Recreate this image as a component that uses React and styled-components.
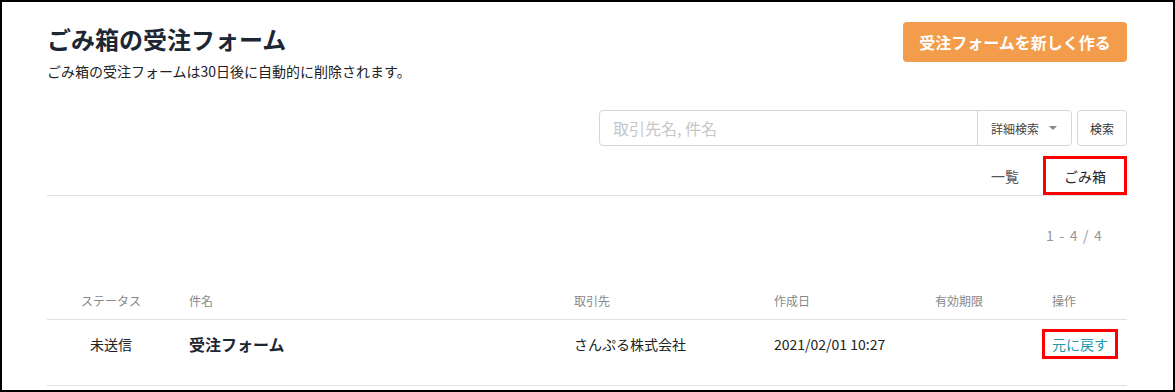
import React from 'react';
import styled, { createGlobalStyle } from 'styled-components';

const GlobalStyle = createGlobalStyle`
    * { box-sizing: border-box; }
    body {
        margin: 0;
        font-family: 'Noto Sans CJK JP', 'Noto Sans', sans-serif;
        color: #222;
        background: #fff;
    }
`;

const Page = styled.div`
    width: 1175px;
    height: 392px;
    border: 2px solid #000;
    padding: 18px 46px 0 45px;
    overflow: hidden;
`;

const Header = styled.div`
    display: flex;
    justify-content: space-between;
    align-items: flex-start;
`;

const TitleBlock = styled.div`
    padding-top: 2px;
`;

const Title = styled.h1`
    margin: 0;
    font-size: 24px;
    line-height: 34px;
    font-weight: 700;
    color: #1d2733;
`;

const Note = styled.p`
    margin: 6px 0 0;
    font-size: 14px;
    line-height: 18px;
    color: #222;
`;

const PrimaryButton = styled.button`
    width: 224px;
    height: 40px;
    margin-top: 2px;
    border: none;
    border-radius: 4px;
    background: #f39c4b;
    color: #fff;
    font-family: inherit;
    font-size: 16px;
    font-weight: 700;
`;

const SearchRow = styled.div`
    display: flex;
    justify-content: flex-end;
    gap: 5px;
    margin-top: 30px;
`;

const SearchGroup = styled.div`
    display: flex;
    width: 473px;
    height: 36px;
    border: 1px solid #d3d7dc;
    border-radius: 4px;
`;

const SearchInput = styled.input`
    flex: 1;
    min-width: 0;
    border: none;
    outline: none;
    padding: 0 13px;
    font-family: inherit;
    font-size: 16px;
    background: transparent;
    &::placeholder { color: #c4c8cc; }
`;

const DetailToggle = styled.div`
    display: flex;
    align-items: center;
    gap: 10px;
    width: 94px;
    padding-left: 13px;
    border-left: 1px solid #d3d7dc;
    font-size: 12px;
    color: #444;
`;

const Caret = styled.span`
    width: 0;
    height: 0;
    border-left: 4px solid transparent;
    border-right: 4px solid transparent;
    border-top: 4px solid #888;
`;

const SearchButton = styled.button`
    width: 50px;
    height: 36px;
    border: 1px solid #d3d7dc;
    border-radius: 4px;
    background: #fff;
    font-family: inherit;
    font-size: 12px;
    color: #333;
`;

const Tabs = styled.div`
    display: flex;
    justify-content: flex-end;
    margin-top: 10px;
    border-bottom: 1px solid #dde1e6;
`;

const Tab = styled.div`
    display: flex;
    align-items: center;
    justify-content: center;
    height: 39px;
    padding: 0 ${p => (p.$boxed ? '18px' : '24px')};
    font-size: 14px;
    color: ${p => (p.$active ? '#222' : '#555')};
    border: ${p => (p.$boxed ? '3px solid #f00' : 'none')};
    margin-bottom: ${p => (p.$boxed ? '-1px' : '0')};
`;

const Count = styled.div`
    margin-top: 29px;
    padding-right: 24px;
    text-align: right;
    font-size: 14px;
    color: #999;
    letter-spacing: 1.2px;
`;

const Table = styled.div`
    margin-top: 41px;
`;

const Row = styled.div`
    display: grid;
    grid-template-columns: 128px 385px 200px 161px 117px 1fr;
    align-items: center;
    height: ${p => (p.$head ? '34px' : '66px')};
    border-bottom: 1px solid #dde1e6;
    padding-bottom: ${p => (p.$head ? '4px' : '18px')};
`;

const Cell = styled.div`
    padding: 0 14px;
    white-space: nowrap;
    font-size: ${p => (p.$head ? '12px' : '14px')};
    color: ${p => (p.$head ? '#888' : '#222')};
    font-weight: ${p => (p.$bold ? 700 : 400)};
    text-align: ${p => (p.$center ? 'center' : 'left')};
    ${p => p.$bold && 'font-size: 16px; color: #1d2733;'}
`;

const RestoreLink = styled.a`
    display: inline-block;
    margin-left: -10px;
    padding: 0 7px;
    border: 3px solid #f00;
    line-height: 24px;
    font-size: 14px;
    white-space: nowrap;
    color: #1a9aab;
    text-decoration: none;
`;

const columns = ['ステータス', '件名', '取引先', '作成日', '有効期限', '操作'];

export default function App() {
    return (
        <>
            <GlobalStyle />
            <Page>
                <Header>
                    <TitleBlock>
                        <Title>ごみ箱の受注フォーム</Title>
                        <Note>ごみ箱の受注フォームは30日後に自動的に削除されます。</Note>
                    </TitleBlock>
                    <PrimaryButton>受注フォームを新しく作る</PrimaryButton>
                </Header>
                <SearchRow>
                    <SearchGroup>
                        <SearchInput placeholder='取引先名, 件名' />
                        <DetailToggle>
                            詳細検索
                            <Caret />
                        </DetailToggle>
                    </SearchGroup>
                    <SearchButton>検索</SearchButton>
                </SearchRow>
                <Tabs>
                    <Tab>一覧</Tab>
                    <Tab $active $boxed>ごみ箱</Tab>
                </Tabs>
                <Count>1 - 4 / 4</Count>
                <Table>
                    <Row $head>
                        {columns.map((c, i) => (
                            <Cell key={c} $head $center={i === 0}>{c}</Cell>
                        ))}
                    </Row>
                    <Row>
                        <Cell $center>未送信</Cell>
                        <Cell $bold>受注フォーム</Cell>
                        <Cell>さんぷる株式会社</Cell>
                        <Cell>2021/02/01 10:27</Cell>
                        <Cell />
                        <Cell>
                            <RestoreLink href='#'>元に戻す</RestoreLink>
                        </Cell>
                    </Row>
                </Table>
            </Page>
        </>
    );
}
